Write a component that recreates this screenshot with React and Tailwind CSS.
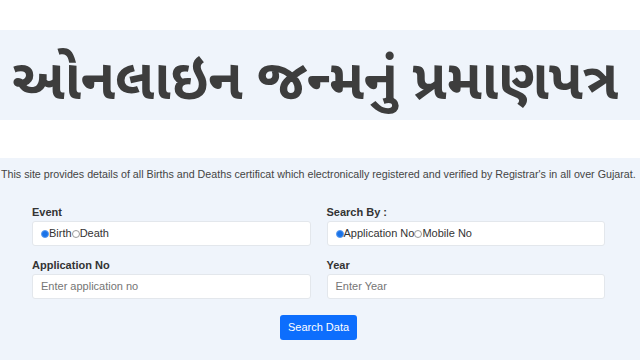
import React from "react";

function Radio({ checked }) {
  return checked ? (
    <span className="inline-block w-[8px] h-[8px] rounded-full bg-[#1a73e8] border border-[#5a9bf0] box-border" />
  ) : (
    <span className="inline-block w-[8px] h-[8px] rounded-full border border-[#9a9a9a] bg-white box-border" />
  );
}

function Field({ label, children }) {
  return (
    <div className="flex flex-col">
      <div className="text-[11px] font-bold text-[#333] leading-[14px] mb-[2px]">{label}</div>
      <div className="h-[25px] bg-white border border-[#e3e7ec] rounded-[3px] flex items-center px-[8px] text-[11px] text-[#333]">
        {children}
      </div>
    </div>
  );
}

export default function App() {
  return (
    <div className="w-[640px] h-[360px] bg-white overflow-hidden" style={{ fontFamily: '"Liberation Sans", Arial, sans-serif' }}>
      <div className="h-[30px] bg-white" />
      <div className="h-[90px] bg-[#eff4fb] flex items-center pl-[12px] pt-[22px]">
        <div
          className="text-[56px] font-bold text-[#3d3d3d] leading-none whitespace-nowrap"
          style={{ fontFamily: '"Noto Sans Gujarati", "Lohit Gujarati", "Noto Sans", sans-serif' }}
        >
          ઓનલાઇન જન્મનું પ્રમાણપત્ર
        </div>
      </div>
      <div className="h-[38px] bg-white" />
      <div className="h-[202px] bg-[#eff4fb] pt-[9px]">
        <div className="text-[10.7px] text-[#444] leading-[14px] pl-[1px] whitespace-nowrap">
          This site provides details of all Births and Deaths certificat which electronically registered and verified by Registrar's in all over Gujarat.
        </div>
        <div className="grid grid-cols-2 gap-x-[16px] gap-y-[12px] px-[32px] mt-[24px] mr-[3px]">
          <Field label="Event">
            <span className="flex items-center">
              <Radio checked />
              <span>Birth</span>
              <Radio />
              <span>Death</span>
            </span>
          </Field>
          <Field label="Search By :">
            <span className="flex items-center">
              <Radio checked />
              <span>Application No</span>
              <Radio />
              <span>Mobile No</span>
            </span>
          </Field>
          <Field label="Application No">
            <span className="text-[#757575]">Enter application no</span>
          </Field>
          <Field label="Year">
            <span className="text-[#757575]">Enter Year</span>
          </Field>
        </div>
        <div className="flex justify-center mt-[16px] pr-[3px]">
          <button className="h-[25px] w-[77px] bg-[#0d6efd] text-white text-[11px] rounded-[3px]">Search Data</button>
        </div>
      </div>
    </div>
  );
}
